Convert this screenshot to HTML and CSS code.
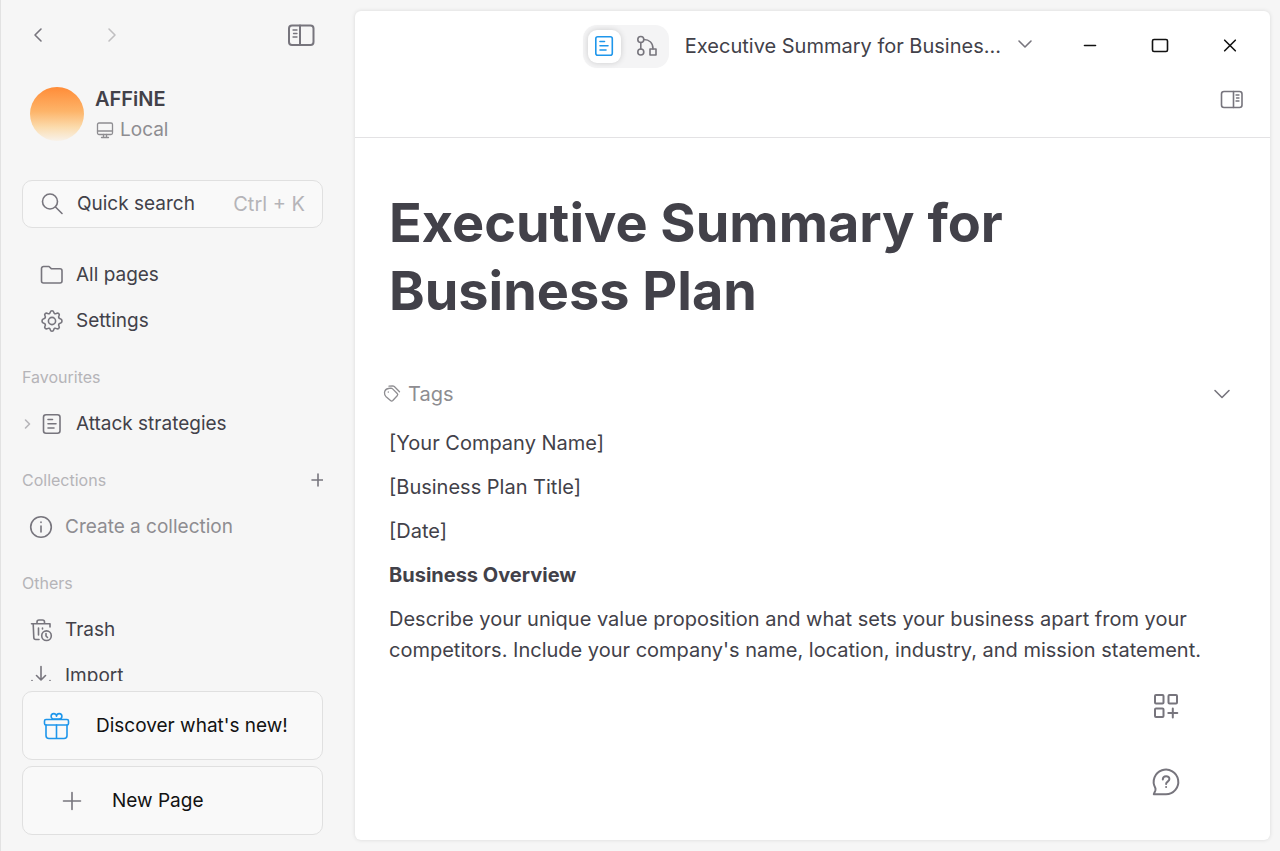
FILE: index.html
```html
<!DOCTYPE html>
<html lang="en">
<head>
    <meta charset="UTF-8">
    <meta name="viewport" content="width=device-width, initial-scale=1.0">
    <title>AFFiNE</title>
    <link rel="stylesheet" href="styles.css">
</head>
<body>
    <div class="app">
        <aside class="sidebar">
            <div class="sidebar-nav">
                <button type="button" class="icon-btn" aria-label="Back">
                    <svg width="32" height="32" viewBox="0 0 32 32"><path d="M19 10l-6 6 6 6"/></svg>
                </button>
                <button type="button" class="icon-btn forward" aria-label="Forward" disabled>
                    <svg width="32" height="32" viewBox="0 0 32 32"><path d="M13 10l6 6-6 6"/></svg>
                </button>
                <button type="button" class="icon-btn toggle-sidebar" aria-label="Toggle sidebar">
                    <svg width="32" height="32" viewBox="0 0 32 32"><rect x="4" y="6.500" width="24.500" height="19.500" rx="3"/><path d="M15 6.500V26"/><path class="thin" d="M8 11h4M8.500 14.500H12M8 18h4"/></svg>
                </button>
            </div>

            <div class="workspace">
                <div class="avatar"></div>
                <div class="workspace-info">
                    <div class="workspace-name">AFFiNE</div>
                    <div class="workspace-type">
                        <svg class="thin" width="20" height="20" viewBox="0 0 20 20"><rect x="2.500" y="3" width="15" height="11.500" rx="1.500"/><path d="M2.500 11h15M8.500 14.500V17M11.500 14.500V17M6.500 17.500h7"/></svg>
                        Local
                    </div>
                </div>
            </div>

            <button type="button" class="search">
                <svg width="24" height="24" viewBox="0 0 24 24"><circle cx="10" cy="9.500" r="7.500"/><path d="M15.500 15l6.500 6.500"/></svg>
                <span>Quick search</span>
                <span class="shortcut">Ctrl + K</span>
            </button>

            <nav class="menu">
                <a href="#" class="menu-item indent">
                    <svg width="24" height="24" viewBox="0 0 24 24"><path d="M1.500 5.500a2 2 0 0 1 2-2h5.500l2.500 2.300h8.500a2 2 0 0 1 2 2v10.200a2 2 0 0 1-2 2H3.500a2 2 0 0 1-2-2z"/></svg>
                    All pages
                </a>
                <a href="#" class="menu-item indent">
                    <svg width="24" height="24" viewBox="0 0 24 24"><circle cx="12" cy="12" r="3.600"/><path d="M10.300 3.200c.4-1.900 3-1.900 3.400 0 .3 1.500 1.500 2 2.800 1.200 1.700-1 3.500.8 2.500 2.500-.8 1.300-.3 2.500 1.200 2.800 2.400.5 2.400 4.100 0 4.600-1.500.3-2 1.500-1.200 2.800 1 1.700-.8 3.500-2.500 2.500-1.300-.8-2.500-.3-2.800 1.200-.4 1.900-3 1.900-3.400 0-.3-1.500-1.500-2-2.800-1.200-1.700 1-3.500-.8-2.500-2.500.8-1.300.3-2.500-1.200-2.800-2.400-.5-2.400-4.100 0-4.600C5.300 9.400 5.800 8.200 5 6.900c-1-1.700.8-3.500 2.500-2.500 1.300.8 2.500.3 2.800-1.200z"/></svg>
                    Settings
                </a>

                <div class="menu-label">Favourites</div>
                <a href="#" class="menu-item">
                    <svg class="expand" width="10" height="16" viewBox="0 0 10 16"><path d="M3.500 4l4 4-4 4"/></svg>
                    <svg width="24" height="24" viewBox="0 0 24 24"><rect x="3.500" y="2.800" width="16.500" height="18.500" rx="2.500"/><path d="M8 7.500h4.500M8 11.800h8M8 16h6"/></svg>
                    Attack strategies
                </a>

                <div class="menu-label">
                    Collections
                    <button type="button" class="icon-btn add" aria-label="New collection">
                        <svg width="20" height="20" viewBox="0 0 20 20"><path d="M10 4v12M4 10h12"/></svg>
                    </button>
                </div>
                <a href="#" class="menu-item outdent muted">
                    <svg width="24" height="24" viewBox="0 0 24 24"><circle cx="12" cy="12" r="10.300"/><path d="M12 11v6M12 7v.5"/></svg>
                    Create a collection
                </a>

                <div class="menu-label">Others</div>
                <a href="#" class="menu-item outdent">
                    <svg width="24" height="24" viewBox="0 0 24 24"><path d="M2.500 5.700h18.500V9M8 5.500V4a2 2 0 0 1 2-2h3.500a2 2 0 0 1 2 2v1.500M4.200 6l.6 13.500a2 2 0 0 0 2 2H10M9.500 10v7M13.500 10v1"/><circle cx="17.500" cy="17.700" r="4.800"/><path d="M17 15.500v2.500l1.500 1.500"/></svg>
                    Trash
                </a>
                <a href="#" class="menu-item outdent">
                    <svg width="24" height="24" viewBox="0 0 24 24"><path d="M12 2.500v13M7.500 11.500l4.500 4.500 4.500-4.500M3 16.500v3a2 2 0 0 0 2 2h14a2 2 0 0 0 2-2v-3"/></svg>
                    Import
                </a>
            </nav>

            <div class="sidebar-bottom">
                <button type="button" class="card-btn">
                    <svg class="gift" width="32" height="32" viewBox="0 0 32 32"><rect x="4.500" y="9.500" width="24" height="5.500" rx="1.500"/><path d="M6 15v10.500a3 3 0 0 0 3 3h15a3 3 0 0 0 3-3V15M16.500 15v13.500M16.500 9h-2.700a2.700 2.700 0 1 1 2.700-2.700 2.700 2.700 0 1 1 2.700 2.700z"/></svg>
                    Discover what's new!
                </button>
                <button type="button" class="card-btn new-page">
                    <svg width="32" height="32" viewBox="0 0 32 32"><path d="M16 7.500v17M7.500 16h17"/></svg>
                    New Page
                </button>
            </div>
        </aside>

        <main class="main">
            <header class="header">
                <div class="title-bar">
                    <div class="mode-switch">
                        <button type="button" class="mode active" aria-label="Page mode">
                            <svg width="24" height="24" viewBox="0 0 24 24"><rect x="3.800" y="2.800" width="16.500" height="18.500" rx="2"/><path d="M8 7.500h4.500M8 11.800h8M8 16h6"/></svg>
                        </button>
                        <button type="button" class="mode" aria-label="Edgeless mode">
                            <svg width="24" height="24" viewBox="0 0 24 24"><circle cx="5.800" cy="5.500" r="3"/><circle cx="5.800" cy="18" r="3"/><rect x="15" y="15" width="6" height="6"/><path d="M5.800 8.500V15M8.800 5.500c5.500 0 9.200 3.500 9.200 9.500"/></svg>
                        </button>
                    </div>
                    <div class="doc-title">Executive Summary for Busines...</div>
                    <button type="button" class="icon-btn doc-menu" aria-label="Page menu">
                        <svg width="24" height="24" viewBox="0 0 24 24"><path d="M6 7l6 6 6-6"/></svg>
                    </button>
                    <div class="window-controls">
                        <button type="button" class="icon-btn" aria-label="Minimize">
                            <svg width="24" height="24" viewBox="0 0 24 24"><path d="M6.500 11.500h11"/></svg>
                        </button>
                        <button type="button" class="icon-btn" aria-label="Maximize">
                            <svg width="24" height="24" viewBox="0 0 24 24"><rect x="4.500" y="5.500" width="15" height="12" rx="1.500"/></svg>
                        </button>
                        <button type="button" class="icon-btn" aria-label="Close">
                            <svg width="24" height="24" viewBox="0 0 24 24"><path d="M6.700 6.200l10.600 10.600M17.300 6.200L6.700 16.800"/></svg>
                        </button>
                    </div>
                </div>
                <div class="tool-bar">
                    <button type="button" class="icon-btn" aria-label="Toggle right sidebar">
                        <svg width="24" height="24" viewBox="0 0 24 24"><rect x="1.500" y="3.500" width="20.500" height="16" rx="2.500"/><path d="M13.500 3.500v16"/><path class="thin" d="M16 7h3M16.500 10H19M16 13h3"/></svg>
                    </button>
                </div>
            </header>

            <article class="page">
                <h1>Executive Summary for Business Plan</h1>
                <div class="tags">
                    <svg class="thin" width="20" height="20" viewBox="0 0 20 20"><path d="M2.500 8.500c.2-2.400 1.500-3.500 4-4l2.300-.3c.8 0 1.300.2 1.800.7l4.600 4.600c.8.8.8 1.500 0 2.300l-4.400 4.700c-.8.8-1.500.8-2.300 0L3.800 12.400c-1-1-1.400-2-1.300-3.900zM7 2.200l3.500-.4c.8 0 1.300.2 1.800.7l5.200 5.300"/><path d="M6.300 8v.2"/></svg>
                    <span>Tags</span>
                    <button type="button" class="icon-btn" aria-label="Expand tags">
                        <svg width="24" height="24" viewBox="0 0 24 24"><path d="M5 8.500l7 7 7-7"/></svg>
                    </button>
                </div>
                <p>[Your Company Name]</p>
                <p>[Business Plan Title]</p>
                <p>[Date]</p>
                <p><strong>Business Overview</strong></p>
                <p>Describe your unique value proposition and what sets your business apart from your competitors. Include your company's name, location, industry, and mission statement.</p>
            </article>

            <div class="floating">
                <button type="button" class="icon-btn" aria-label="Templates">
                    <svg width="32" height="32" viewBox="0 0 32 32"><rect x="5" y="5" width="8.500" height="8.500" rx="1"/><rect x="18.500" y="5" width="8.500" height="8.500" rx="1"/><rect x="5" y="18.500" width="8.500" height="8.500" rx="1"/><path d="M22.800 18.500v9M18.300 23h9"/></svg>
                </button>
                <button type="button" class="icon-btn" aria-label="Help">
                    <svg width="32" height="32" viewBox="0 0 32 32"><path d="M3.800 28.200H16A12.300 12.300 0 1 0 5.200 21.800c.5 1 .5 1.500.2 2.500z"/><path d="M12.800 13.500c0-4.500 6.600-4.300 6.600-.5 0 2.600-3.300 2.600-3.300 5M16.100 20.900v.2"/></svg>
                </button>
            </div>
        </main>
    </div>
</body>
</html>
```
FILE: styles.css
```css
* {
    box-sizing: border-box;
}
body {
    margin: 0;
    font-family: Inter, "Liberation Sans", sans-serif;
    font-size: 20px;
    line-height: 24px;
    color: #424149;
    background-color: #f6f6f6;
}
svg {
    display: block;
    flex-shrink: 0;
    fill: none;
    stroke: currentColor;
    stroke-width: 1.6;
    stroke-linecap: round;
    stroke-linejoin: round;
}
.thin {
    stroke-width: 1.3;
}
button {
    padding: 0;
    border: none;
    background: none;
    font: inherit;
    color: inherit;
    cursor: pointer;
}
.app {
    display: flex;
    height: 100vh;
    border-left: 1px solid #e2e2e2;
}
.icon-btn {
    color: #77757d;
}

/* Sidebar */
.sidebar {
    display: flex;
    flex-direction: column;
    flex: 0 0 354px;
    padding: 11px 32px 16px 21px;
    font-size: 19px;
}
.sidebar-nav {
    display: flex;
    align-items: center;
    height: 48px;
    margin-bottom: 28px;
}
.sidebar-nav .forward {
    margin-left: 42px;
    color: #c0bfc1;
}
.sidebar-nav .toggle-sidebar {
    margin-left: auto;
    margin-right: 6px;
}
.toggle-sidebar svg {
    stroke-width: 2;
}
.workspace {
    display: flex;
    gap: 11px;
    margin-bottom: 38px;
    padding-left: 8px;
}
.avatar {
    width: 54px;
    height: 54px;
    border-radius: 50%;
    background: linear-gradient(#ff8c38, #fdb469 45%, #fbdcae 75%, #f8f2ea);
}
.workspace-name {
    font-size: 20px;
    font-weight: 600;
}
.workspace-type {
    display: flex;
    align-items: center;
    gap: 5px;
    margin-top: 7px;
    color: #8e8d91;
}
.search {
    display: flex;
    align-items: center;
    flex-shrink: 0;
    gap: 13px;
    height: 48px;
    padding: 0 17px;
    border: 1px solid #e0e0e0;
    border-radius: 10px;
    background-color: #f9f9f9;
}
.search svg {
    color: #77757d;
}
.search .shortcut {
    margin-left: auto;
    font-size: 20px;
    color: #b5b4b8;
}
.menu {
    flex: 1;
    min-height: 0;
    padding-top: 24px;
    margin-bottom: 10px;
    overflow: hidden;
}
.menu-item {
    display: flex;
    align-items: center;
    gap: 12px;
    height: 46px;
    color: inherit;
    text-decoration: none;
}
.menu-item svg {
    color: #77757d;
}
.menu-item.indent {
    padding-left: 18px;
}
.menu-item.outdent {
    padding-left: 7px;
}
.menu-item.muted {
    color: #8e8d91;
}
.menu-item .expand {
    margin-right: -4px;
    color: #b5b4b8;
}
.menu-label {
    display: flex;
    align-items: center;
    justify-content: space-between;
    height: 20px;
    margin: 23px 0 14px;
    font-size: 16px;
    color: #b5b4b8;
}
.menu-label .add {
    margin-right: -5px;
}
.sidebar-bottom {
    display: flex;
    flex-direction: column;
    gap: 6px;
}
.card-btn {
    display: flex;
    align-items: center;
    gap: 24px;
    height: 69px;
    padding: 0 17px;
    border: 1px solid #e0e0e0;
    border-radius: 10px;
    background-color: #f9f9f9;
    color: #121212;
}
.card-btn svg {
    color: #77757d;
}
.card-btn .gift {
    color: #1e96eb;
}
.card-btn.new-page {
    padding-left: 33px;
}

/* Main panel */
.main {
    position: relative;
    flex: 1;
    min-width: 0;
    margin: 11px 10px 11px 0;
    border-radius: 6px;
    background-color: #fff;
    box-shadow: 0 0 4px rgba(0, 0, 0, 0.12);
}
.header {
    padding: 11px 26px 0;
    border-bottom: 1px solid #e3e2e4;
}
.title-bar {
    display: flex;
    align-items: center;
    justify-content: flex-end;
    height: 48px;
}
.mode-switch {
    display: flex;
    gap: 10px;
    padding: 5px;
    border-radius: 14px;
    background-color: #f4f4f5;
}
.mode {
    display: flex;
    align-items: center;
    justify-content: center;
    width: 33px;
    height: 33px;
    border-radius: 9px;
    color: #77757d;
}
.mode.active {
    background-color: #fff;
    color: #1e96eb;
    box-shadow: 0 0 6px rgba(0, 0, 0, 0.16);
}
.doc-title {
    margin: 0 12px 0 16px;
    white-space: nowrap;
}
.window-controls {
    display: flex;
    gap: 46px;
    margin-left: 41px;
    margin-right: 2px;
}
.window-controls .icon-btn {
    color: #121212;
}
.tool-bar {
    display: flex;
    justify-content: flex-end;
    padding: 18px 0 25px;
}
.page {
    padding: 51px 34px;
}
h1 {
    margin: 0 0 54px;
    font-size: 54px;
    line-height: 68px;
    font-weight: 700;
}
.tags {
    display: flex;
    align-items: center;
    gap: 6px;
    height: 30px;
    margin: 0 2px 19px -7px;
    color: #8e8d91;
}
.tags .icon-btn {
    margin-left: auto;
}
p {
    margin: 0 0 13px;
    line-height: 31px;
}
strong {
    font-weight: 700;
}
.floating {
    position: absolute;
    right: 88px;
    bottom: 42px;
    display: flex;
    flex-direction: column;
    gap: 44px;
}
.floating svg {
    stroke-width: 2;
}
```
